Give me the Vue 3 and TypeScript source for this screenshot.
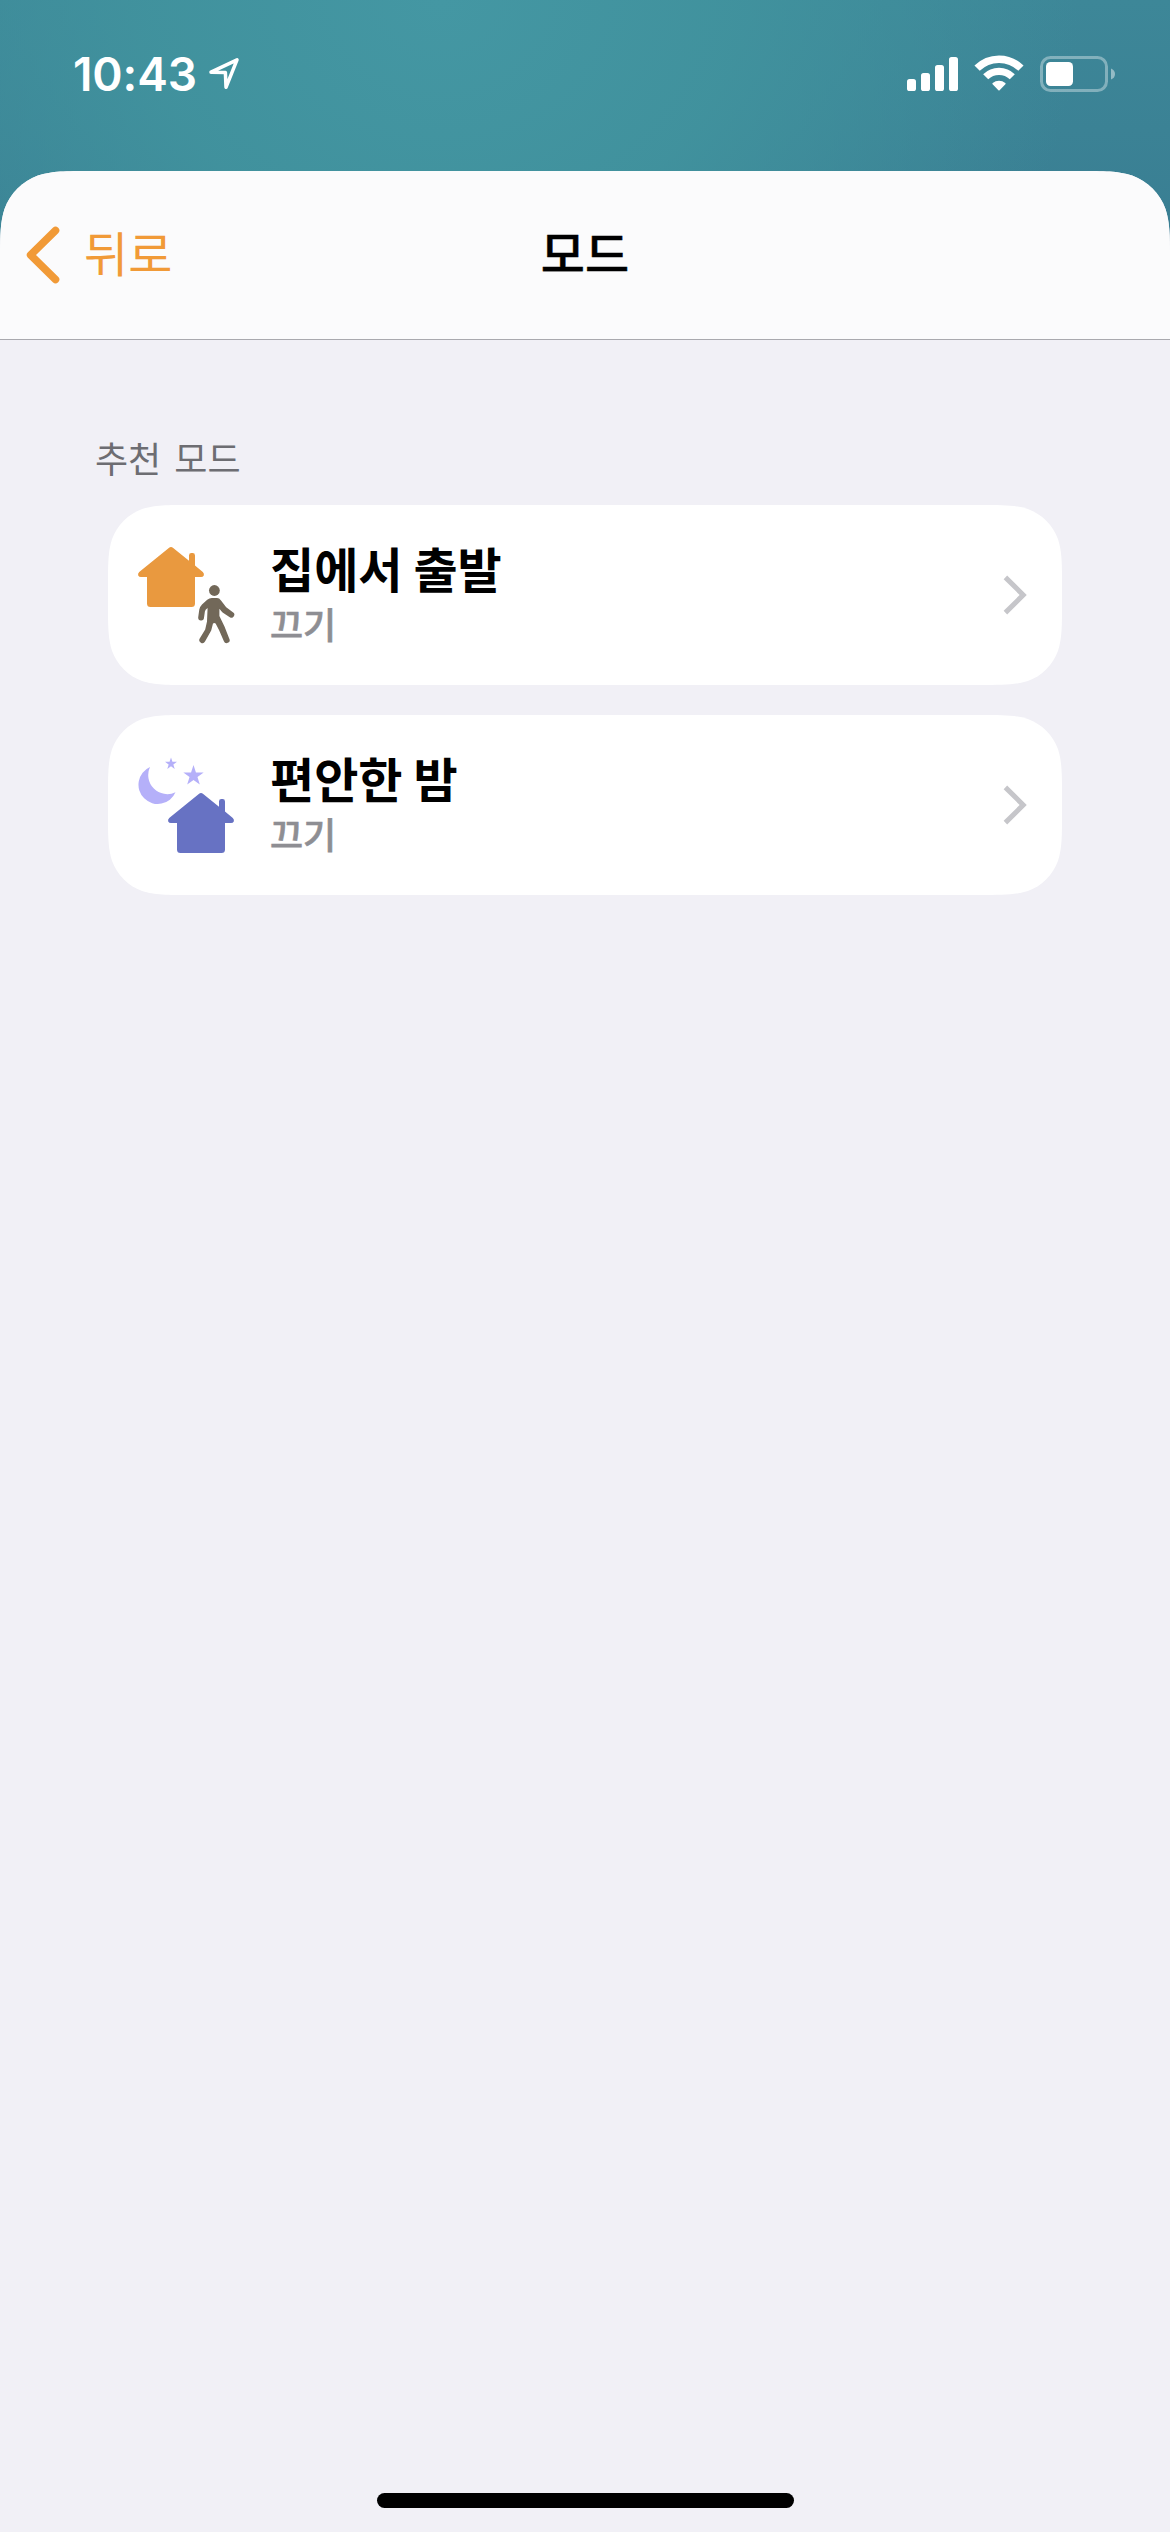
<script setup lang="ts">
interface Mode {
  id: 'leave' | 'night'
  title: string
  state: string
}

const modes: Mode[] = [
  { id: 'leave', title: '집에서 출발', state: '끄기' },
  { id: 'night', title: '편안한 밤', state: '끄기' },
]

const HOUSE =
  'M30.8 .9Q33 -.9 35.2 .9L51 13.7V8.4Q51 6 53.4 6H54.6Q57 6 57 8.4V18.6L64.8 25Q66.5 26.6 65.8 28.4Q65 30 63 30H57V56.5Q57 60 53.5 60H12.5Q9 60 9 56.5V30H3Q1 30 .2 28.4Q-.5 26.6 1.2 25Z'

// Continuous-curvature corner, walked from the horizontal edge to the vertical one.
const CORNER: [number, number][] = [
  [1.52866, 0], [1.08849, 0], [0.86841, 0], [0.63149, 0.07491],
  [0.37282, 0.16906], [0.16906, 0.37282], [0.07491, 0.63149],
  [0, 0.86841], [0, 1.08849], [0, 1.52866],
]

function squircle(w: number, h: number, r: number, bottom = true): string {
  const map = (flipX: boolean, flipY: boolean, reverse: boolean) => {
    const pts = CORNER.map(([x, y]) => {
      const px = flipX ? w - x * r : x * r
      const py = flipY ? h - y * r : y * r
      return `${px.toFixed(2)} ${py.toFixed(2)}`
    })
    if (reverse) pts.reverse()
    return `${pts[0]} C ${pts.slice(1).join(' ')}`
  }
  const lower = bottom
    ? `L ${map(true, true, true)} L ${map(false, true, false)}`
    : `L ${w} ${h} L 0 ${h}`
  return `path("M ${map(false, false, true)} L ${map(true, false, false)} ${lower} Z")`
}

const sheetShape = { clipPath: squircle(1170, 2361, 60, false) }
const cardShape = { clipPath: squircle(954, 180, 54) }

function star(cx: number, cy: number, r: number): string {
  return Array.from({ length: 10 }, (_, i) => {
    const a = (Math.PI / 5) * i - Math.PI / 2
    const d = i % 2 ? r * 0.39 : r
    return `${(cx + d * Math.cos(a)).toFixed(2)},${(cy + d * Math.sin(a)).toFixed(2)}`
  }).join(' ')
}
</script>

<template>
  <div class="screen">
    <header class="status">
      <span class="clock">10:43</span>
      <svg class="location" width="32" height="34" viewBox="0 0 32 34">
        <path d="M3 15.2 29 2.8 18 30.3 17.4 15.6Z" fill="none" stroke="#fff" stroke-width="3.5" stroke-linejoin="round" />
      </svg>
      <svg class="signal" width="51" height="34" viewBox="0 0 51 34" fill="#fff">
        <rect x="0" y="22" width="9" height="12" rx="2.6" />
        <rect x="14" y="16" width="9" height="18" rx="2.6" />
        <rect x="28" y="8" width="9" height="26" rx="2.6" />
        <rect x="42" y="0" width="9" height="34" rx="2.6" />
      </svg>
      <svg class="wifi" width="50" height="36" viewBox="0 0 50 36">
        <g fill="none" stroke="#fff">
          <path d="M3.1 13.2A31 31 0 0 1 46.9 13.2" stroke-width="7.5" />
          <path d="M11.7 21.8A18.8 18.8 0 0 1 38.3 21.8" stroke-width="7.2" />
        </g>
        <path d="M18.6 29.2Q18 28.6 18.7 28A10.4 10.4 0 0 1 31.3 28Q32 28.6 31.4 29.2L25.6 35.2Q25 35.8 24.4 35.2Z" fill="#fff" />
      </svg>
      <svg class="battery" width="76" height="36" viewBox="0 0 76 36">
        <rect x="1.5" y="1.5" width="65" height="33" rx="9" fill="none" stroke="#fff" stroke-opacity=".36" stroke-width="3" />
        <rect x="6" y="6" width="27" height="24" rx="4.5" fill="#fff" />
        <path d="M71 12.5Q75 14 75 18T71 23.5Z" fill="#fff" fill-opacity=".45" />
      </svg>
    </header>

    <main class="sheet" :style="sheetShape">
      <nav class="nav">
        <div class="back">
          <svg width="34" height="58" viewBox="0 0 34 58">
            <path d="M29.5 4.5 4.6 29 29.5 53.5" fill="none" stroke="#f19a37" stroke-width="7.6" stroke-linecap="round" stroke-linejoin="round" />
          </svg>
          <span>뒤로</span>
        </div>
        <h1>모드</h1>
      </nav>

      <section class="content">
        <h2>추천 모드</h2>
        <div class="list">
          <article v-for="mode in modes" :key="mode.id" class="card" :style="cardShape">
            <svg class="icon" width="98" height="98" viewBox="-1 -1 98 98">
              <template v-if="mode.id === 'leave'">
                <path :d="HOUSE" fill="#e9993f" />
                <g fill="#726859">
                  <circle cx="76.4" cy="43.5" r="5.4" />
                  <path d="M73.8 51H79Q81.3 51 83 53.4L88.2 60.2 94.9 65.2A2.9 2.9 0 0 1 91.8 70.2L84.6 65.5Q83.9 65 81.4 61.8V69L86.5 79.5 91.4 91.9A3 3 0 0 1 85.9 94.3L81 83 77.6 76.4Q76.3 75.6 75 76.4L73.2 83.5 67 94.6A3 3 0 0 1 61.7 91.6L67.2 82.5 69 74.5 69.6 61Q67.1 62.8 66.9 64.5L66 70.8A2.9 2.9 0 0 1 60.2 70.3L61.3 62.5Q61.8 59.8 64 57.5L69.2 52.8Q71.4 51 73.8 51Z" />
                </g>
              </template>
              <template v-else>
                <g fill="#b5b0f9">
                  <path d="M12 10A19.3 19.3 0 1 0 37.5 35.3A19.1 19.1 0 0 1 12 10Z" />
                  <polygon :points="star(33, 6.8, 6.3)" />
                  <polygon :points="star(55.5, 18.8, 10.7)" />
                </g>
                <path :d="HOUSE" fill="#6772c3" transform="translate(30 36)" />
              </template>
            </svg>
            <div class="labels">
              <span class="title">{{ mode.title }}</span>
              <span class="state">{{ mode.state }}</span>
            </div>
            <svg class="chevron" width="24" height="40" viewBox="0 0 24 40">
              <path d="M2.4 2.4 20.2 20 2.4 37.6" fill="none" stroke="#c6c6ca" stroke-width="5" />
            </svg>
          </article>
        </div>
      </section>

      <div class="home-bar"></div>
    </main>
  </div>
</template>

<style>
body {
  margin: 0;
}
</style>

<style scoped>
.screen {
  width: 1170px;
  height: 2532px;
  display: flex;
  flex-direction: column;
  overflow: hidden;
  font-family: 'Noto Sans CJK KR', sans-serif;
  background:
    radial-gradient(ellipse 640px 560px at 440px 0, #4497a3 0%, rgba(65, 147, 158, 0.9) 45%, rgba(62, 141, 153, 0) 100%),
    linear-gradient(to bottom, #3d8798 0, #397d92 260px);
}

.status {
  height: 171px;
  box-sizing: border-box;
  padding: 55px 54px 0 73px;
  display: flex;
  align-items: flex-start;
}

.clock {
  width: 135px;
  font-family: Inter, sans-serif;
  font-size: 46px;
  line-height: 38px;
  font-weight: 600;
  letter-spacing: -0.1px;
  white-space: nowrap;
  color: #fff;
}

.location {
  margin-top: 2px;
}

.signal {
  margin: 2px 16px 0 auto;
}

.wifi {
  margin-right: 16px;
}

.battery {
  margin-top: 1px;
}

.sheet {
  flex: 1;
  display: flex;
  flex-direction: column;
  background: #f1f0f6;
}

.nav {
  height: 169px;
  box-sizing: border-box;
  border-bottom: 1px solid #a9a9ae;
  background: #fbfbfc;
  display: grid;
  grid-template-columns: 1fr auto 1fr;
  align-items: center;
}

.back {
  display: flex;
  align-items: center;
  padding-left: 26px;
  gap: 24px;
  color: #f19a37;
  font-size: 48px;
  line-height: 60px;
}

.back span {
  margin-top: -8px;
}

h1 {
  margin: -8px 0 0;
  font-size: 48px;
  line-height: 60px;
  font-weight: 500;
  -webkit-text-stroke: 0.4px currentColor;
  color: #000;
}

.content {
  flex: 1;
  padding: 93px 108px 0;
}

h2 {
  margin: 0 0 24px -13px;
  font-size: 36px;
  line-height: 48px;
  font-weight: 400;
  word-spacing: 5px;
  color: #6d6d72;
}

.list {
  display: flex;
  flex-direction: column;
  gap: 30px;
}

.card {
  height: 180px;
  box-sizing: border-box;
  padding: 0 35px 0 29px;
  display: flex;
  align-items: center;
  background: #fff;
}

.labels {
  margin-left: 35px;
  margin-top: -6px;
  flex: 1;
  display: flex;
  flex-direction: column;
  gap: 2px;
}

.title {
  font-size: 48px;
  line-height: 60px;
  font-weight: 700;
  color: #000;
}

.state {
  font-size: 36px;
  line-height: 48px;
  font-weight: 500;
  -webkit-text-stroke: 0.6px currentColor;
  color: #8e8e93;
}

.home-bar {
  width: 417px;
  height: 15px;
  margin: 0 auto 24px;
  border-radius: 7.5px;
  background: #000;
}
</style>
